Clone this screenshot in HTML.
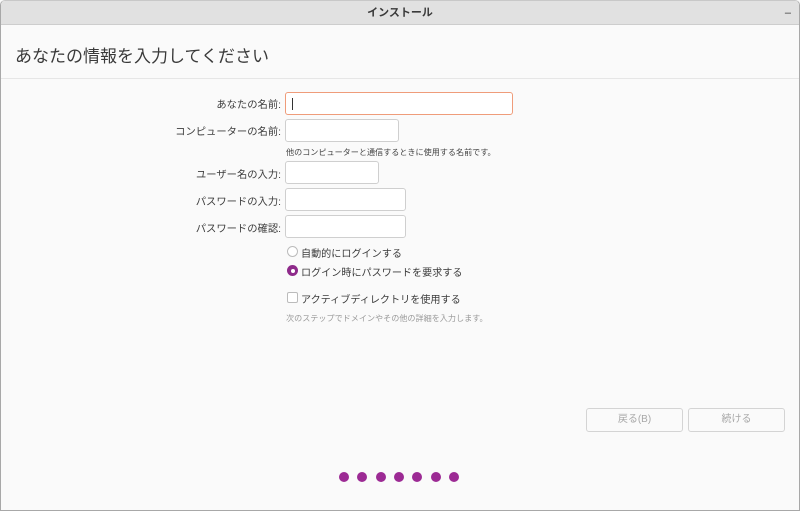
<!DOCTYPE html>
<html><head><meta charset="utf-8"><style>
*{margin:0;padding:0;box-sizing:border-box}
body{width:800px;height:511px;background:#fafafa;font-family:"Liberation Sans","Noto Sans CJK JP",sans-serif;color:#3c3c3c;position:relative;overflow:hidden}
.win{position:absolute;left:0;top:0;width:800px;height:511px;border:1px solid #a8a8a8;border-top:1px solid #c8c8c8;border-radius:5px 5px 0 0}
.tb{position:absolute;left:1px;top:1px;width:798px;height:24px;background:#e1e1e1;border-bottom:1px solid #cdcdcd;border-radius:4px 4px 0 0;text-align:center;font-size:11px;font-weight:bold;line-height:24px;color:#3a3a3a}
.min{position:absolute;right:8px;top:0;font-weight:normal}
h1{position:absolute;left:15px;top:42px;font-size:17px;font-weight:normal;color:#3a3a3a}
.sep{position:absolute;left:1px;top:78px;width:798px;height:1px;background:#e6e6e6}
.l{position:absolute;font-size:10.3px;color:#3c3c3c;text-align:right;right:519px}
.in{position:absolute;left:285px;background:#fff;border:1px solid #cfcfcf;border-radius:3px}
.s{position:absolute;font-size:8.1px;color:#444}
.g{position:absolute;font-size:8.1px;color:#999}
.o{position:absolute;font-size:10.1px;color:#3c3c3c}
.btn{position:absolute;top:408px;height:24px;width:97px;border:1px solid #d4d4d4;border-radius:3px;background:#fafafa;font-size:10px;color:#a8a8a8;text-align:center;line-height:22px}
.dot{position:absolute;top:472px;width:10px;height:10px;border-radius:50%;background:#9c2a94}
</style></head><body>
<div class="win"></div>
<div class="tb">インストール<span class="min">–</span></div>
<h1>あなたの情報を入力してください</h1>
<div class="sep"></div>
<div class="l" style="top:96px">あなたの名前:</div>
<div class="in" style="top:92px;width:228px;height:23px;border-color:#ef9c7a"><div style="position:absolute;left:6px;top:5px;width:1px;height:12px;background:#333"></div></div>
<div class="l" style="top:123px">コンピューターの名前:</div>
<div class="in" style="top:119px;width:114px;height:23px"></div>
<div class="s" style="left:286px;top:147px">他のコンピューターと通信するときに使用する名前です。</div>
<div class="l" style="top:166px">ユーザー名の入力:</div>
<div class="in" style="top:161px;width:94px;height:23px"></div>
<div class="l" style="top:193px">パスワードの入力:</div>
<div class="in" style="top:188px;width:121px;height:23px"></div>
<div class="l" style="top:220px">パスワードの確認:</div>
<div class="in" style="top:215px;width:121px;height:23px"></div>
<div style="position:absolute;left:287px;top:246px;width:11px;height:11px;border:1px solid #bbb;border-radius:50%;background:#fff"></div>
<div class="o" style="left:301px;top:245px">自動的にログインする</div>
<div style="position:absolute;left:287px;top:265px;width:11px;height:11px;border-radius:50%;background:#8e2a8a"><div style="position:absolute;left:3.5px;top:3.5px;width:4px;height:4px;border-radius:50%;background:#fff"></div></div>
<div class="o" style="left:301px;top:264px">ログイン時にパスワードを要求する</div>
<div style="position:absolute;left:287px;top:292px;width:11px;height:11px;border:1px solid #bbb;border-radius:2px;background:#fff"></div>
<div class="o" style="left:301px;top:291px">アクティブディレクトリを使用する</div>
<div class="g" style="left:286px;top:313px">次のステップでドメインやその他の詳細を入力します。</div>
<div class="btn" style="left:586px">戻る(B)</div>
<div class="btn" style="left:688px">続ける</div>
<div class="dot" style="left:339px"></div>
<div class="dot" style="left:357px"></div>
<div class="dot" style="left:376px"></div>
<div class="dot" style="left:394px"></div>
<div class="dot" style="left:412px"></div>
<div class="dot" style="left:431px"></div>
<div class="dot" style="left:449px"></div>
</body></html>
